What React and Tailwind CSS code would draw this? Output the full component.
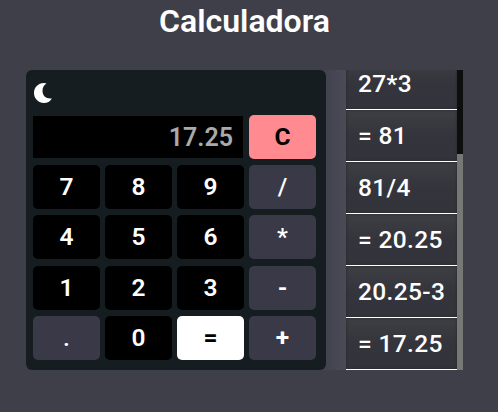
const history = ["27*3", "= 81", "81/4", "= 20.25", "20.25-3", "= 17.25"];

const dark = "bg-black text-white font-semibold";
const operator = "bg-[#3a3947] text-white font-medium";
const boldOperator = "bg-[#3a3947] text-white font-bold";

const rows = [
  [["7", dark], ["8", dark], ["9", dark], ["/", operator]],
  [["4", dark], ["5", dark], ["6", dark], ["*", operator]],
  [["1", dark], ["2", dark], ["3", dark], ["-", boldOperator]],
  [[".", operator], ["0", dark], ["=", "bg-white text-black font-bold"], ["+", boldOperator]],
];

function Key({ label, tone }) {
  return (
    <button className={`h-11 w-[67px] rounded-[5px] text-center leading-[44px] ${tone}`}>
      {label}
    </button>
  );
}

function Moon() {
  return (
    <svg className="block h-5 w-[18px]" viewBox="0 0 18 20" fill="#fff">
      <path d="M12.600.6C9.900 1.900 8.500 4.700 8.500 8c0 5 3.700 8.100 9.400 7.400C16.200 18.400 13.200 20 10 20 4.400 20 0 15.600 0 10S4.300 0 9.900 0c1 0 1.900.2 2.700.6Z" />
    </svg>
  );
}

export default function App() {
  return (
    <main className="h-[412px] w-[498px] overflow-hidden bg-[#3f3f4a] font-['Roboto',sans-serif] text-[24.5px] font-medium text-white">
      <h1 className="h-[70px] pt-0.5 pr-[9px] text-center text-[32px] leading-[38px] font-semibold">Calculadora</h1>
      <div className="ml-[26px] flex h-[300px] w-[437px] bg-linear-to-r from-[#3f3f4a] from-[1%] via-[#444450] via-[69%] to-[#4c4b57] to-[74%]">
        <section className="h-[300px] w-[300px] rounded-md bg-[#151d20] pl-[7px]">
          <div className="h-[45px] pt-[12.5px] pl-px">
            <Moon />
          </div>
          <div className="flex h-[50px] gap-1.5">
            <div className="mt-px h-[42px] w-[210px] bg-black pr-2.5 text-right text-[25px] leading-[43px] font-semibold text-[#aaa]">
              17.25
            </div>
            <Key label="C" tone="bg-[#ff8a8f] text-black font-bold" />
          </div>
          <div className="flex flex-col gap-[6.4px]">
            {rows.map((row, i) => (
              <div key={i} className="flex gap-[5px]">
                {row.map(([label, tone]) => (
                  <Key key={label} label={label} tone={tone} />
                ))}
              </div>
            ))}
          </div>
        </section>
        <aside className="ml-5 flex h-[300px] w-[117px]">
          <ul className="flex h-[300px] w-[111px] flex-col justify-end overflow-hidden">
            {history.map((entry) => (
              <li
                key={entry}
                className="h-[52px] shrink-0 border-b border-white bg-linear-to-b from-[#3e3f43] via-[#34343c] to-[#33333b] pl-3 leading-[52px] tracking-[0.35px] whitespace-nowrap shadow-[inset_0_0_3px_#25252c]"
              >
                {entry}
              </li>
            ))}
          </ul>
          <div className="flex w-1.5 flex-col justify-end bg-[#0e0e0f]">
            <div className="h-[216px] bg-[#777776]" />
          </div>
        </aside>
      </div>
    </main>
  );
}
